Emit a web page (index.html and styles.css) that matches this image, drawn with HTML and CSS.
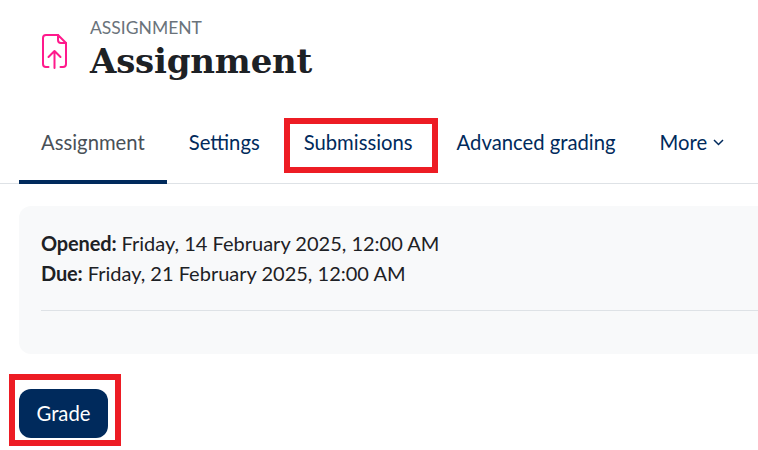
FILE: index.html
```html
<!DOCTYPE html>
<html lang="en">
<head>
  <meta charset="UTF-8" />
  <title>Assignment</title>
  <link rel="stylesheet" href="styles.css">
</head>
<body>
  <header class="page-header">
    <div class="activity-icon">
      <svg width="25" height="35" viewBox="0 0 25 35" fill="none" stroke="#ff1a8c" stroke-width="2" stroke-linecap="round" stroke-linejoin="round">
        <path d="M16 1H4a3 3 0 0 0-3 3v26a3 3 0 0 0 3 3h2.500"/>
        <path d="M18.500 33H21a3 3 0 0 0 3-3V9"/>
        <path d="M16 1v5a3 3 0 0 0 3 3h5L16 1"/>
        <path d="M12.500 34V17M6.500 23l6-6 6 6"/>
      </svg>
    </div>
    <div class="titles">
      <div class="eyebrow">ASSIGNMENT</div>
      <h1>Assignment</h1>
    </div>
  </header>
  <nav class="tabs">
    <a class="tab active" href="#">Assignment</a>
    <a class="tab" href="#">Settings</a>
    <a class="tab marked" href="#">Submissions</a>
    <a class="tab" href="#">Advanced grading</a>
    <a class="tab" href="#">More
      <svg width="11" height="7" viewBox="0 0 11 7" fill="none" stroke="#002a5c" stroke-width="1.500"><path d="M1 1l4.500 4.500L10 1"/></svg>
    </a>
  </nav>
  <section class="dates">
    <div><strong>Opened:</strong> Friday, 14 February 2025, 12:00 AM</div>
    <div><strong>Due:</strong> Friday, 21 February 2025, 12:00 AM</div>
    <hr>
  </section>
  <div class="actions">
    <button class="grade" type="button">Grade</button>
  </div>
</body>
</html>
```

FILE: styles.css
```css
html, body {
  height: 450px;
  overflow: hidden;
}
body {
  margin: 0;
  background: #fff;
  color: #1d2125;
  font-family: Lato, sans-serif;
  font-size: 20px;
}
.page-header {
  display: flex;
  align-items: flex-start;
  gap: 23px;
  height: 100px;
  padding: 19px 0 0 42px;
  box-sizing: border-box;
}
.activity-icon {
  display: flex;
  margin-top: 15px;
}
.eyebrow {
  color: #6a737b;
  font-size: 17.500px;
  line-height: 18px;
}
h1 {
  margin: 0;
  font-family: "DejaVu Serif", serif;
  font-size: 34px;
  letter-spacing: -0.200px;
  line-height: 48px;
  font-weight: bold;
}
.tabs {
  display: flex;
  height: 84px;
  padding-left: 19px;
  box-shadow: inset 0 -1px 0 #dee2e6;
}
.tab {
  position: relative;
  display: flex;
  align-items: center;
  gap: 6px;
  padding: 4px 22px 0;
  border-bottom: 4px solid transparent;
  color: #002a5c;
  font-size: 20.250px;
  text-decoration: none;
}
.tab.active {
  color: #495057;
  border-bottom-color: #002a5c;
}
/* red annotation boxes drawn over the screenshot */
.tab.marked::after {
  content: "";
  position: absolute;
  top: 18px;
  left: 2px;
  right: -3px;
  height: 43px;
  border: 6px solid #ed1c24;
}
.dates {
  margin: 22px 0 0 19px;
  padding: 22px 0 0 22px;
  height: 148px;
  box-sizing: border-box;
  background: #f8f9fa;
  border-radius: 12px 0 0 12px;
  line-height: 30px;
}
.dates strong {
  letter-spacing: -0.150px;
}
.dates hr {
  margin: 22px 0 0;
  border: 0;
  border-top: 1px solid #dee2e6;
}
.actions {
  position: relative;
  width: 89px;
  margin: 35px 0 0 19px;
}
.actions::after {
  content: "";
  position: absolute;
  top: -15px;
  left: -10px;
  right: -13px;
  bottom: -8px;
  border: 6px solid #ed1c24;
}
.grade {
  display: block;
  width: 89px;
  height: 49px;
  padding: 0 0 2px;
  background: #002a5c;
  color: #fff;
  border: none;
  border-radius: 12px;
  font-family: Lato, sans-serif;
  font-size: 20.300px;
}
```
